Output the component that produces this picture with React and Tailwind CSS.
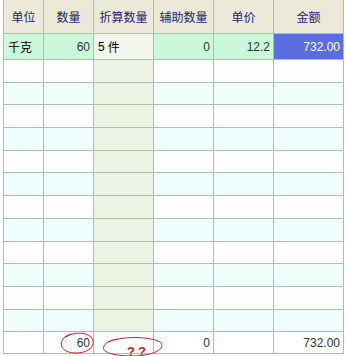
import React from 'react';

const cols = ['单位', '数量', '折算数量', '辅助数量', '单价', '金额'];
const widths = ['w-[40px]', 'w-[50px]', 'w-[60px]', 'w-[60px]', 'w-[60px]', 'w-[70px]'];

const cell = 'border-r border-b border-[#a6c4a6] shrink-0 flex items-center';

const App = () => {
  const rows = Array.from({ length: 12 });

  return (
    <div className="w-[346px] h-[356px] bg-white relative overflow-hidden font-['Liberation_Sans','Noto_Sans_CJK_SC',sans-serif]">
      <div className="ml-[3px] w-[341px] border-l border-[#a6c4a6] flex flex-col">
        {/* header */}
        <div className="flex h-[34px] bg-[#ece9d8]">
          {cols.map((c, i) => (
            <div key={c} className={`${cell} ${widths[i]} justify-center text-[12px] text-[#1b2673] font-['Noto_Sans_CJK_SC',sans-serif]`}>
              {c}
            </div>
          ))}
        </div>

        {/* editing row */}
        <div className="flex h-[26px] text-[12px] text-black">
          <div className={`${cell} ${widths[0]} bg-[#c9f8db] pl-[4px] font-['Noto_Sans_CJK_SC',sans-serif]`}>千克</div>
          <div className={`${cell} ${widths[1]} bg-[#c9f8db] justify-end pr-[3px] text-[#333]`}>60</div>
          <div className={`${cell} ${widths[2]} bg-[#f1f5eb] pl-[4px]`}>5 <span className="ml-[3px] font-['Noto_Sans_CJK_SC',sans-serif]">件</span></div>
          <div className={`${cell} ${widths[3]} bg-[#c9f8db] justify-end pr-[3px] text-[#333]`}>0</div>
          <div className={`${cell} ${widths[4]} bg-[#c9f8db] justify-end pr-[3px] text-[#333]`}>12.2</div>
          <div className={`${cell} ${widths[5]} bg-[#5b6de0] justify-end pr-[3px] text-white`}>732.00</div>
        </div>

        {/* empty rows */}
        {rows.map((_, r) => (
          <div key={r} className="flex h-[22.7px]">
            {widths.map((w, i) => (
              <div
                key={i}
                className={`${cell} ${w} ${i === 2 ? 'bg-[#ecf2e4]' : r % 2 === 1 ? 'bg-[#f0fefe]' : 'bg-[#fefffc]'}`}
              />
            ))}
          </div>
        ))}

        {/* totals */}
        <div className="flex h-[22px] text-[12px] text-[#333] bg-white">
          <div className={`${cell} ${widths[0]}`} />
          <div className={`${cell} ${widths[1]} justify-end pr-[3px]`}>60</div>
          <div className={`${cell} ${widths[2]}`} />
          <div className={`${cell} ${widths[3]} justify-end pr-[3px]`}>0</div>
          <div className={`${cell} ${widths[4]}`} />
          <div className={`${cell} ${widths[5]} justify-end pr-[3px]`}>732.00</div>
        </div>
      </div>

      {/* red annotations */}
      <svg className="absolute left-0 top-0" width="346" height="356" viewBox="0 0 346 356">
        <path d="M66 337 C74 331 90 332 93 340 C95 348 86 353 76 353 C64 353 58 346 63 339 C65 336 68 335 71 334" fill="none" stroke="#c0262a" strokeWidth="1" />
        <path d="M108 342 C120 336 150 336 160 342 C166 347 158 355 134 356 C112 356 101 352 104 346 C106 342 112 340 118 339" fill="none" stroke="#c0262a" strokeWidth="1" />
      </svg>
      <div className="absolute left-[127px] top-[345px] text-[13px] font-bold text-[#c01818] tracking-[3px] leading-none font-['Liberation_Sans',sans-serif]">??</div>
    </div>
  );
};

export default App;
